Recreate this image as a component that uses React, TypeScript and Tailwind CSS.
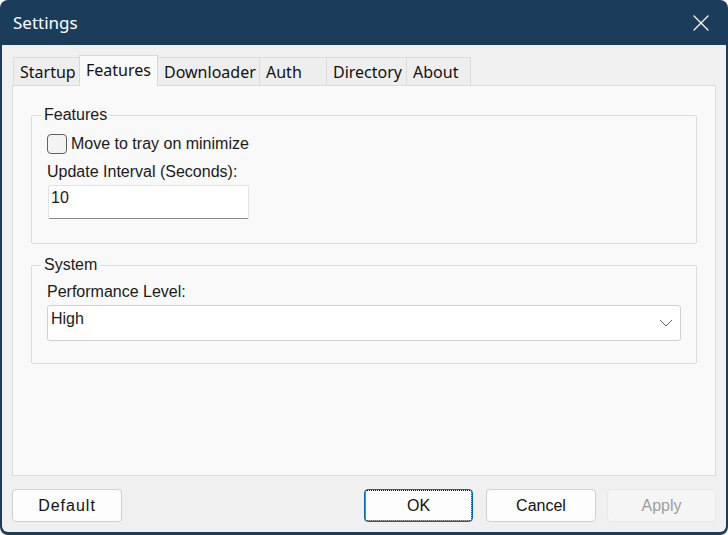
const tabs = [
  { label: "Startup", w: "w-[67px]" },
  { label: "Features", w: "w-[79px]", active: true },
  { label: "Downloader", w: "w-[103px]" },
  { label: "Auth", w: "w-[68px]" },
  { label: "Directory", w: "w-[81px]" },
  { label: "About", w: "w-[65px]" },
];

function GroupBox({ title, className, children }: { title: string; className?: string; children: React.ReactNode }) {
  return (
    <fieldset className={`border border-[#dcdcdc] rounded-[2px] px-[9px] ${className ?? ""}`}>
      <legend className="px-[3px] text-[16px] leading-[18px] text-[#1a1a1a]">{title}</legend>
      <div className="px-[6px]">{children}</div>
    </fieldset>
  );
}

export default function App() {
  return (
    <div className="w-[728px] h-[535px] bg-[#1b3d5b] rounded-[8px] flex flex-col overflow-hidden font-['Liberation_Sans',Arial,sans-serif] text-[#1a1a1a]">

      {/* Title bar */}
      <div className="h-[45px] flex items-center justify-between pl-[13px] pr-[19px] shrink-0">
        <span className="font-['Noto_Sans',sans-serif] text-[17px] text-white">Settings</span>
        <svg width="16" height="16" viewBox="0 0 16 16" className="mt-px">
          <path d="M1 1L15 15M15 1L1 15" stroke="#ffffff" strokeWidth="1.3" strokeLinecap="round" />
        </svg>
      </div>

      {/* Body */}
      <div className="flex-1 mx-[2px] mb-[3px] bg-[#f0f0f0] rounded-b-[6px] flex flex-col px-[10px] pt-[10px] pb-[10px]">

        {/* Tabs */}
        <div className="flex items-end h-[30px] pl-px font-['Noto_Sans',sans-serif] text-[16px]">
          {tabs.map((t, i) =>
            t.active ? (
              <div
                key={t.label}
                className={`${t.w} h-[31px] -mb-px -ml-px relative z-10 bg-[#f9f9f9] border border-b-0 border-[#d9d9d9] flex items-center pl-[6px] pb-[2px] text-[#111]`}
              >
                {t.label}
              </div>
            ) : (
              <div
                key={t.label}
                className={`${t.w} h-[28px] ${i === 0 ? "" : "-ml-px"} bg-[#eeeeee] border border-b-0 border-[#dcdcdc] flex items-center pl-[6px] text-[#111]`}
              >
                {t.label}
              </div>
            )
          )}
        </div>

        {/* Tab panel */}
        <div className="flex-1 bg-[#f9f9f9] border border-[#dcdcdc] px-[18px] pt-[20px]">

          <GroupBox title="Features" className="pb-[24px]">
            <div className="mt-[10px] h-[20px] flex items-center gap-[4px]">
              <div className="w-[20px] h-[20px] rounded-[4px] border border-[#606060] bg-[#f3f3f3]" />
              <span className="text-[16px] leading-[18px]">Move to tray on minimize</span>
            </div>
            <div className="mt-[9px] text-[16px] leading-[18px]">Update Interval (Seconds):</div>
            <div className="mt-[4px] ml-px w-[201px] h-[34px] bg-white border border-[#e3e3e3] border-b-[#8a8a8a] rounded-[2px] pl-[2px] pt-[3px] text-[16px] leading-[18px]">
              10
            </div>
          </GroupBox>

          <GroupBox title="System" className="mt-[12px] pb-[22px]">
            <div className="pt-[9px] text-[16px] leading-[18px]">Performance Level:</div>
            <div className="mt-[4px] h-[36px] bg-white border border-[#d0d0d0] rounded-[3px] flex items-center justify-between pl-[3px] pr-[7px]">
              <span className="self-start mt-[4px] text-[16px] leading-[18px]">High</span>
              <svg width="14" height="8" viewBox="0 0 14 8">
                <path d="M1 1L7 7L13 1" fill="none" stroke="#606060" strokeWidth="1" />
              </svg>
            </div>
          </GroupBox>
        </div>

        {/* Buttons */}
        <div className="mt-[13px] h-[33px] flex text-[16px]">
          <button className="w-[110px] h-[33px] bg-[#fdfdfd] border border-[#d0d0d0] rounded-[4px] tracking-[1px] text-[#111]">
            Default
          </button>
          <button className="ml-auto w-[109px] h-[33px] bg-[#fdfdfd] border border-[#0067c0] rounded-[4px] relative text-[#111]">
            <span className="absolute inset-0 border border-dotted border-[#111] rounded-[2px]" />
            OK
          </button>
          <button className="ml-[13px] w-[110px] h-[33px] bg-[#fdfdfd] border border-[#d0d0d0] rounded-[4px] text-[#111]">
            Cancel
          </button>
          <button className="ml-[11px] w-[109px] h-[33px] bg-[#f5f5f5] border border-[#e8e8e8] rounded-[4px] text-[#9d9d9d]">
            Apply
          </button>
        </div>
      </div>
    </div>
  );
}
